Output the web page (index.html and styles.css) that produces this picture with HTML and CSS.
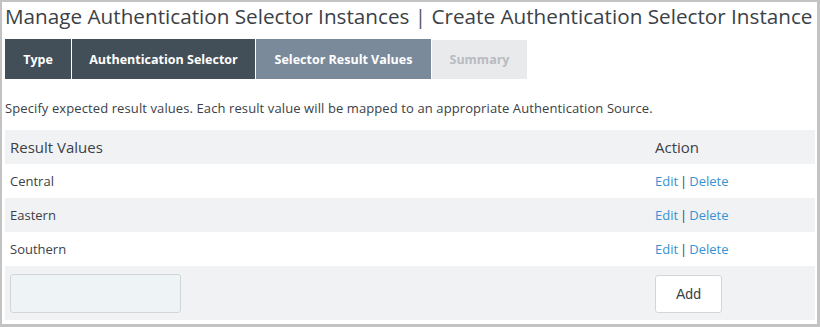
FILE: index.html
```html
<!DOCTYPE html>
<html>
<head>
<meta charset="utf-8">
<link rel="stylesheet" href="styles.css">
</head>
<body>
<div class="frame">
  <h1 class="title">Manage Authentication Selector Instances <span class="sep">|</span> Create Authentication Selector Instance</h1>
  <div class="tabs">
    <div class="tab done">Type</div>
    <div class="tab done wide">Authentication Selector</div>
    <div class="tab active">Selector Result Values</div>
    <div class="tab todo">Summary</div>
  </div>
  <p class="desc">Specify expected result values. Each result value will be mapped to an appropriate Authentication Source.</p>
  <div class="table">
    <div class="row head"><div class="c1">Result Values</div><div class="c2">Action</div></div>
    <div class="row"><div class="c1">Central</div><div class="c2"><a class="link">Edit</a><span class="bar">|</span><a class="link">Delete</a></div></div>
    <div class="row alt"><div class="c1">Eastern</div><div class="c2"><a class="link">Edit</a><span class="bar">|</span><a class="link">Delete</a></div></div>
    <div class="row"><div class="c1">Southern</div><div class="c2"><a class="link">Edit</a><span class="bar">|</span><a class="link">Delete</a></div></div>
    <div class="row add alt"><div class="c1"><input class="field" type="text"></div><div class="c2"><button class="btn">Add</button></div></div>
  </div>
</div>
</body>
</html>
```
FILE: styles.css
```css
html, body { margin: 0; padding: 0; background: #fff; }
body { font-family: "Open Sans", "Liberation Sans", sans-serif; color: #3b4147; }
.frame {
  width: 820px; height: 327px; box-sizing: border-box;
  border-style: solid; border-color: #c3c3c3;
  border-width: 2px 3px 3px 2px;
  padding: 0 0 0 3px;
  overflow: hidden;
}
.title {
  margin: 0; font-weight: 400; font-size: 20.7px; line-height: 28px;
  padding-top: 0; white-space: nowrap; color: #3b4147;
}
.sep { color: #555b61; }
.tabs { display: flex; margin-top: 9px; height: 40px; }
.tab {
  display: flex; align-items: center; justify-content: center;
  font-size: 12.5px; font-weight: 700; color: #fff; margin-right: 1px;
}
.tab.done { background: #434f58; width: 66px; }
.tab.done.wide { width: 183px; }
.tab.active { background: #7a8a9b; width: 175px; }
.tab.todo { background: #e9eaec; color: #b8bbbf; width: 95px; margin-top: 1px; }
.desc { margin: 0; padding-top: 20px; font-size: 13px; line-height: 18px; color: #3b4147; letter-spacing: 0.1px; }
.table { margin-top: 13px; width: 810px; }
.row { display: flex; align-items: center; height: 34px; font-size: 13px; }
.row.head { background: #f1f2f4; font-size: 15px; color: #3b4147; }
.row.alt { background: #f1f2f4; }
.row.add { height: 54px; }
.c1 { flex: 1; padding-left: 5px; }
.c2 { width: 160px; }
.link { color: #3592d3; }
.bar { margin: 0 2px; color: #3b4147; }
.field {
  display: block; width: 171px; height: 39px; box-sizing: border-box;
  background: #eef3f6; border: 1px solid #d3d6d9; border-radius: 3px; margin-top: 1px;
}
.btn {
  display: block; width: 67px; height: 38px; background: #fff;
  border: 1px solid #d3d6d9; border-radius: 3px; font-family: "Liberation Sans", sans-serif;
  font-size: 14px; color: #3b4147; margin-top: 2px;
}
```
